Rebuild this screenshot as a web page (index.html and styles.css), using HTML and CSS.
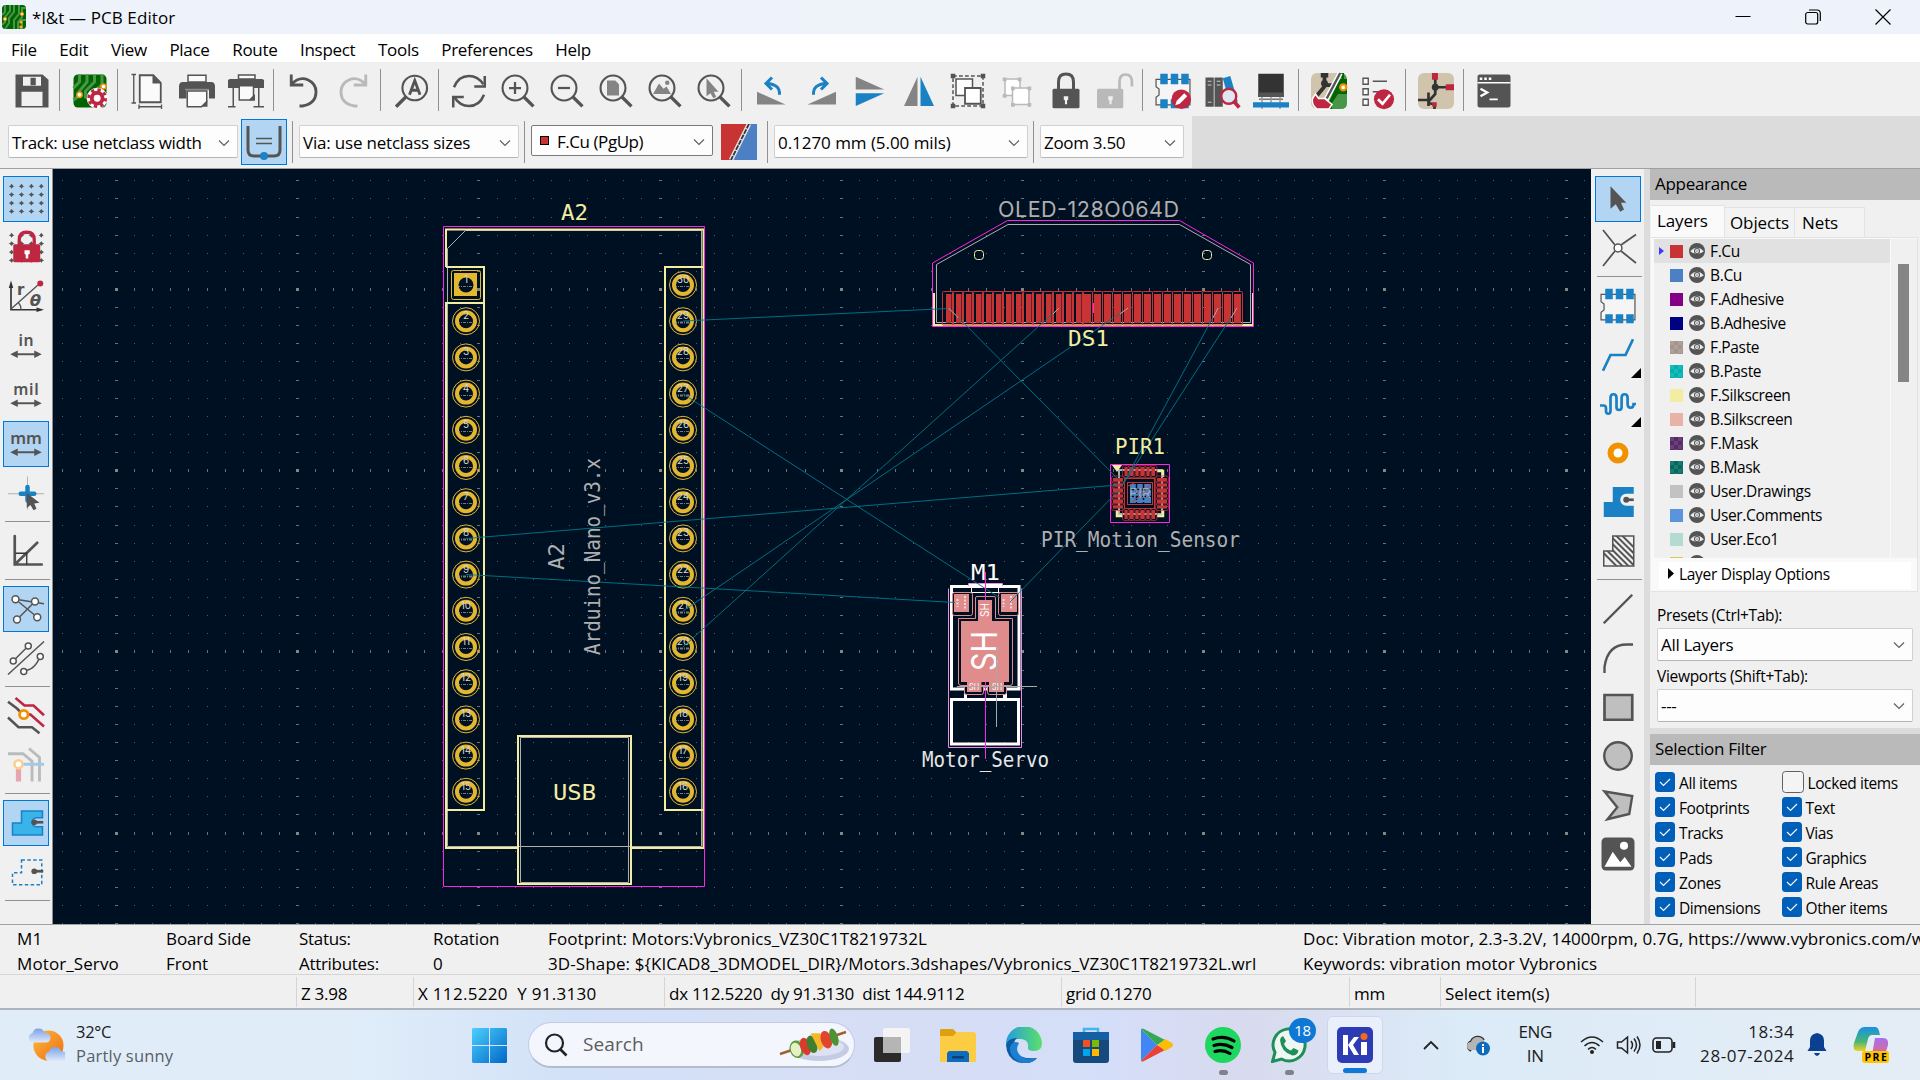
FILE: index.html
```html
<!DOCTYPE html>
<html lang="en">
<head>
<meta charset="utf-8">
<title>*l&amp;t — PCB Editor</title>
<link rel="stylesheet" href="styles.css">
</head>
<body>
<svg class="defs" width="0" height="0">
  <symbol id="eye" viewBox="0 0 16 16"><circle cx="8" cy="8" r="8" fill="#545454"/><path d="M1.2 8.2Q8 1.4 14.8 8.2Q8 14 1.2 8.2Z" fill="#f0f0f0"/><circle cx="8" cy="8" r="2.500" fill="#f0f0f0" stroke="#545454" stroke-width="1.100"/><circle cx="8" cy="8" r=".7" fill="#545454"/></symbol>
  <symbol id="chev" viewBox="0 0 12 8"><path d="M1 1.500l5 5 5-5" fill="none" stroke="#606060" stroke-width="1.200"/></symbol>
  <symbol id="lens" viewBox="0 0 24 24"><circle cx="10" cy="10" r="8.300" fill="none" stroke="#545454" stroke-width="1.400"/><path d="M16 16l6.300 6.300" stroke="#545454" stroke-width="2.200"/></symbol>
  <symbol id="dots" viewBox="0 0 24 24"><g fill="#545454"><path id="dr" d="M.4 3.500l1-.4 1-1.200 1 1.200 1 .4-1 .4-1 1.200-1-1.200zM7 3.500l1-.4 1-1.200 1 1.200 1 .4-1 .4-1 1.200-1-1.200zM13.600 3.500l1-.4 1-1.200 1 1.200 1 .4-1 .4-1 1.200-1-1.200zM20.200 3.500l1-.4 1-1.200 1 1.200 1 .4-1 .4-1 1.200-1-1.200z"/><use href="#dr" y="5.600"/><use href="#dr" y="11.200"/><use href="#dr" y="16.800"/></g></symbol>
  <symbol id="chip" viewBox="0 0 24 24"><path d="M.7 4.200h22.600v17H.7v-5l2-1.500v-4l-2-1.500z" fill="#f5f5f5" stroke="#545454" stroke-width=".8"/><path d="M3.500.5h5v7h-5zm7 0h5v7h-5zm7 0h5v7h-5zM3.500 17.500h5v6h-5zm7 0h5v6h-5zm7 0h5v6h-5z" fill="#1a81c4"/></symbol>
</svg>

<header class="titlebar">
  <svg class="appicon" viewBox="0 0 24 24"><rect width="24" height="24" rx="3.500" fill="#006400"/><path d="M3 0v7L0 10M8 0v6L3 12v5l-3 3M12 0v7l-5 6v5l-4 6M17 0v9l-5 6v9M24 3h-4v9l-4 5v7M24 15h-4v9" fill="none" stroke="#489648" stroke-width="2"/><g fill="#fff" stroke="#f29100" stroke-width="1.200"><circle cx="3" cy="14" r="1.500"/><circle cx="20" cy="9" r="1.500"/><circle cx="19" cy="17" r="1.200"/><circle cx="19" cy="22" r="1.200"/></g></svg>
  <span class="caption">*l&amp;t — PCB Editor</span>
  <div class="winbtns">
    <svg viewBox="0 0 16 16"><path d="M.5 7.500h15" stroke="#000"/></svg>
    <svg viewBox="0 0 16 16"><rect x=".7" y="3.500" width="12" height="11.500" rx="2" fill="none" stroke="#000" stroke-width="1.200"/><path d="M4 1h8q3.300 0 3.300 3.300V12" fill="none" stroke="#000" stroke-width="1.200"/></svg>
    <svg viewBox="0 0 16 16"><path d="M.5.5l15 15M15.500.5l-15 15" stroke="#000" stroke-width="1.200"/></svg>
  </div>
</header>
<nav class="menubar"><span>File</span><span>Edit</span><span>View</span><span>Place</span><span>Route</span><span>Inspect</span><span>Tools</span><span>Preferences</span><span>Help</span></nav>

<div class="toolbar">
  <b><svg viewBox="0 0 24 24"><path d="M1 1h18l4 3.500V23H1z" fill="#545454"/><path d="M6 2.500h12v6H6zM5 12.500h14V22H5z" fill="#f0f0f0"/><path d="M11 3.200h3.500v5H11z" fill="#545454"/></svg></b><i></i>
  <b><svg viewBox="0 0 24 24"><rect x="1" y="1" width="22" height="22" rx="3" fill="#006400"/><path d="M5 1v5L1 10M10 1v5l-5 6v3l-4 3M15 1v5l-6 6v5M20 1v7l-6 5" fill="none" stroke="#489648" stroke-width="2"/><circle cx="21" cy="9" r="1.700" fill="#fff" stroke="#f29100"/><circle cx="5" cy="14.500" r="1.800" fill="#fff" stroke="#f29100"/><circle cx="16.800" cy="16.800" r="7" fill="#fff"/><circle cx="16.800" cy="16.800" r="3.600" fill="none" stroke="#bf2641" stroke-width="2.600"/><circle cx="16.800" cy="16.800" r="5.600" fill="none" stroke="#bf2641" stroke-width="2" stroke-dasharray="2.200 2.200"/></svg></b><i></i>
  <b><svg viewBox="0 0 24 24"><path d="M6.500 1.500h9l5 5V19.500h-14z" fill="#fafafa" stroke="#545454" stroke-width="1.200"/><path d="M15 1.500v5.500h5.500z" fill="#545454"/><path d="M2.500 1.300v18.500M1 1h3M1 20h3M6 22.500h15M6 21v3M21 21v3" stroke="#545454" stroke-width=".9"/></svg></b>
  <b><svg viewBox="0 0 24 24"><path d="M6 1.500h12V6H6z" fill="#fafafa" stroke="#545454"/><path d="M2.500 6h19Q24 6 24 9v8h-4v-6H5v6H0V9q0-3 2.500-3z" fill="#545454"/><path d="M4 11h16" stroke="#8a8a8a"/><path d="M5.500 12h13v7l-3.500 3.500H5.500z" fill="#fafafa" stroke="#545454"/><path d="M19 18.500v4h-4z" fill="#545454"/></svg></b>
  <b><svg viewBox="0 0 24 24"><path d="M7 1.300h11V4H7z" fill="#fafafa" stroke="#545454"/><path d="M0 5q0-1 1.500-1h21Q24 4 24 5v5H0z" fill="#545454"/><path d="M3.500 10v12M20.500 10v12M0 22.500h5M17 22.500h7" stroke="#545454"/><path d="M7.500 8.500h9.500v7L14.500 18h-7z" fill="#fafafa" stroke="#545454"/><path d="M18 14v4.500h-4z" fill="#545454"/></svg></b><i></i>
  <b><svg viewBox="0 0 24 24"><path d="M3.500 1v7h8M3.500 7.500Q9 2 14.500 4.500 20 7 20 12.500q0 8-9 9.500H9" fill="none" stroke="#545454" stroke-width="1.900"/></svg></b>
  <b><svg viewBox="0 0 24 24"><path d="M20.500 1v7h-8M20.500 7.500Q15 2 9.500 4.500 4 7 4 12.500q0 8 9 9.500h2" fill="none" stroke="#b9b9b9" stroke-width="1.900"/></svg></b><i></i>
  <b><svg viewBox="0 0 24 24"><circle cx="14.500" cy="10" r="8.200" fill="none" stroke="#545454" stroke-width="1.400"/><path d="M8.500 16l-6.500 6.500" stroke="#545454" stroke-width="2.200"/><path d="M11 14.500L14.500 5 18 14.500M12.300 11.500h4.500" fill="none" stroke="#545454" stroke-width="1.900"/></svg></b><i></i>
  <b><svg viewBox="0 0 24 24"><path d="M2 9.500Q5 2 12 2q6 0 9.500 5.500M22 14.500Q19 22 12 22q-6 0-9.500-5.500" fill="none" stroke="#545454" stroke-width="1.700"/><path d="M22.500 2v7h-7M1.500 23v-7h7" fill="none" stroke="#545454" stroke-width="1.700"/></svg></b>
  <b><svg viewBox="0 0 24 24"><use href="#lens"/><path d="M10 6v8M6 10h8" stroke="#545454" stroke-width="1.500"/></svg></b>
  <b><svg viewBox="0 0 24 24"><use href="#lens"/><path d="M6 10h8" stroke="#545454" stroke-width="1.500"/></svg></b>
  <b><svg viewBox="0 0 24 24"><use href="#lens"/><path d="M6 5h5.500L14 7.500V15H6z" fill="#848484"/></svg></b>
  <b><svg viewBox="0 0 24 24"><use href="#lens"/><path d="M4 14l4-7 3 3.500 2-1.500 3 5z" fill="#848484"/><circle cx="13.500" cy="6.500" r="1.500" fill="#848484"/></svg></b>
  <b><svg viewBox="0 0 24 24"><use href="#lens"/><path d="M7 3.500v12l2.700-2 1.800 3.300 2-1-1.700-3.300H15z" fill="#848484"/></svg></b><i></i>
  <b><svg viewBox="0 0 24 24"><path d="M2 12.500V21h19z" fill="#848484"/><path d="M17 14.500Q17.500 7.500 8.500 7M12 3L8 7l4 4" fill="none" stroke="#1a81c4" stroke-width="2"/></svg></b>
  <b><svg viewBox="0 0 24 24"><path d="M22 12.500V21H3z" fill="#848484"/><path d="M7 14.500Q6.500 7.500 15.500 7M12 3l4 4-4 4" fill="none" stroke="#1a81c4" stroke-width="2"/></svg></b>
  <b><svg viewBox="0 0 24 24"><path d="M2.500 2.500v8.500h19z" fill="#848484"/><path d="M2.500 22v-8.500h19z" fill="#1a81c4"/></svg></b>
  <b><svg viewBox="0 0 24 24"><path d="M11 2.500V22H2z" fill="#848484"/><path d="M13 2.500V22h9z" fill="#1a81c4"/></svg></b>
  <b><svg viewBox="0 0 24 24"><path d="M2 2h20v20H2z" fill="none" stroke="#545454" stroke-dasharray="2.500 1.500"/><path d="M4 4h11v11H4z" fill="#fff" stroke="#545454"/><path d="M10 10h10.500v10.500H10z" fill="#fff" stroke="#545454" stroke-width="1.200"/><path d="M.5.5h3v3h-3zm20 0h3v3h-3zm0 20h3v3h-3zm-20 0h3v3h-3z" fill="#545454"/></svg></b>
  <b><svg viewBox="0 0 24 24"><path d="M4 4h10v11H4z" fill="#fff" stroke="#b9b9b9"/><path d="M9 10h11v11H9z" fill="#fff" stroke="#b9b9b9"/><path d="M2.500 3h2.500v2.500H2.500zm10 0H15v2.500h-2.500zm-10 11H5v2.500H2.500zM8 9h2.500v2.500H8zm11 0h2.500v2.500H19zM8 20h2.500v2.500H8zm11 0h2.500v2.500H19z" fill="#b9b9b9"/></svg></b>
  <b><svg viewBox="0 0 24 24"><path d="M7 12V6q0-5.300 5-5.300T17 6v6" fill="none" stroke="#545454" stroke-width="2"/><rect x="3" y="10.500" width="18" height="13" rx="1" fill="#545454"/><path d="M10.500 15.500h3v2.200l-.8.7v2.500h-1.400v-2.500l-.8-.7z" fill="#f0f0f0"/></svg></b>
  <b><svg viewBox="0 0 24 24"><path d="M15 12V6q0-5 4-5 4.300 0 4.300 5v3" fill="none" stroke="#b9b9b9" stroke-width="1.800"/><rect x="0" y="10.500" width="17.500" height="13" rx="1" fill="#b9b9b9"/><path d="M7.500 15.500h3v2.200l-.8.7v2.500H8.300v-2.500l-.8-.7z" fill="#f0f0f0"/></svg></b><i></i>
  <b><svg viewBox="0 0 24 24"><use href="#chip"/><circle cx="17.500" cy="17.500" r="6.500" fill="#bf2641"/><path d="M13.500 21.500l1-3 5-5 2 2-5 5z" fill="#fff"/></svg></b>
  <b><svg viewBox="0 0 24 24"><path d="M1 3h5.500v19.500H1zM7 3h5.500v19.500H7z" fill="#545454"/><path d="M12.500 3.500l5-1.500 5 17-5 2z" fill="#1a81c4"/><path d="M2.500 5.500H5M2.500 8H5M8.500 5.500H11M8.500 8H11M2.500 19.500H5" stroke="#ccc" stroke-width=".7"/><circle cx="16.500" cy="15.500" r="5" fill="#dce8f2" stroke="#bf2641" stroke-width="1.600"/><path d="M20 19l3.500 4" stroke="#bf2641" stroke-width="2.500"/></svg></b>
  <b><svg viewBox="0 0 24 24"><path d="M3.500.5h17V16h-17z" fill="#333"/><path d="M3.500 13h17v3h-17z" fill="#545454"/><path d="M4 17.500h16" stroke="#777"/><path d="M6 16v4M12 16v4M18 16v4M6 22v2M18 22v2" stroke="#999"/><path d="M0 19.500h24V23H0z" fill="#1a81c4"/></svg></b><i></i>
  <b><svg viewBox="0 0 24 24"><rect width="24" height="24" rx="4" fill="#d0c4ac"/><path d="M24 6v14q0 4-4 4H8L19 0h1q4 0 4 6z" fill="#489648"/><path d="M24 4v10h-6l-4 6v4h-4l9-20zM19 0h3v7z" fill="#006400"/><path d="M9 0v9l-5 6M9 8h5" stroke="#333" stroke-width="2.500" fill="none"/><path d="M6.500 0h5v3h-5z" fill="#333"/><circle cx="9" cy="7" r="2.300" fill="#333"/><circle cx="21.500" cy="9.500" r="2" fill="#fff" stroke="#f29100" stroke-width="1.500"/><path d="M19.500 0L10 18" stroke="#fff" stroke-width="3.500"/><path d="M19.500 0L10.500 17" stroke="#545454" stroke-width="1.600"/><path d="M3 14l2 3h4l5 4-2 3H4q-4-3-3-7z" fill="#bf2641" stroke="#fff"/></svg></b>
  <b><svg viewBox="0 0 24 24"><path d="M2 3.500h3.500v4H2zm0 7h3.500v4H2zm0 7h3.500v4H2z" fill="#fafafa" stroke="#545454" stroke-width=".9"/><path d="M8.500 5.500H18M8.500 12.500H15" stroke="#545454"/><circle cx="16" cy="17.500" r="6.700" fill="#bf2641"/><path d="M12 17.500l3 3 5-6" fill="none" stroke="#fff" stroke-width="1.800"/></svg></b><i></i>
  <b><svg viewBox="0 0 24 24"><rect width="24" height="24" rx="4" fill="#d0c4ac"/><path d="M11.500 2v12L7 19M0 18h7v4M7 13v7M11.500 9.500H22M7 20l4 1v3" fill="none" stroke="#333" stroke-width="1.800"/><circle cx="11.500" cy="9.500" r="2.300" fill="#333"/><path d="M9.300 0h4v4.500h-4zM18.500 7.500H24v4h-5.500zM9.500 19.500h3v3h-3z" fill="#bf2641"/></svg></b><i></i>
  <b><svg viewBox="0 0 24 24"><rect x="1" y="1" width="22" height="22" rx="1.500" fill="#545454"/><path d="M1 6.500h22" stroke="#fff"/><path d="M2.500 3h1.700v1.700H2.500zm3 0h1.700v1.700H5.500zm3 0h1.700v1.700H8.500zM9 17h5.500v1.200H9z" fill="#fff"/><path d="M3 10.500l4.500 2.500L3 15.500" fill="none" stroke="#fff" stroke-width="1.500"/></svg></b>
</div>

<div class="optbar">
  <div class="optrow">
    <div class="combo c1">Track: use netclass width<svg><use href="#chev"/></svg></div>
    <div class="autow on"><svg viewBox="0 0 36 36"><path d="M2 2v24q0 6 6 6h20q6 0 6-6V2" fill="none" stroke="#545454" stroke-width="3"/><path d="M10 14.500h16M10 19.500h16" stroke="#545454" stroke-width="1.600"/><circle cx="18" cy="32" r="4" fill="#1a81c4"/></svg></div>
    <i></i>
    <div class="combo c2">Via: use netclass sizes<svg><use href="#chev"/></svg></div>
    <i></i>
    <div class="combo c3"><em></em>F.Cu (PgUp)<svg><use href="#chev"/></svg></div>
    <svg class="pair" viewBox="0 0 36 36"><path d="M0 0h28L9 36H0z" fill="#c83434"/><path d="M28 0h8v36H9z" fill="#4d7fc4"/><path d="M28 0L10 36" stroke="#e8e8e8" stroke-width="4.500"/><path d="M28 0L10 36" stroke="#333" stroke-width="1.800" stroke-dasharray="5 1"/></svg>
    <i></i>
    <div class="combo c4">0.1270 mm (5.00 mils)<svg><use href="#chev"/></svg></div>
    <i></i>
    <div class="combo c5">Zoom 3.50<svg><use href="#chev"/></svg></div>
  </div>
</div>

<main class="work">
  <aside class="vbar left">
    <b class="on"><svg viewBox="0 0 24 24"><use href="#dots"/></svg></b>
    <b><svg viewBox="0 0 24 24"><use href="#dots"/><path d="M7.500 11V6.500q0-5 5-5t5 5V11" fill="none" stroke="#bf2641" stroke-width="2.200"/><rect x="3.500" y="9.500" width="18" height="12" rx="1" fill="#bf2641"/><path d="M11 13.500h3.500v2.300l-1 .7V19h-1.700v-2.500l-.8-.7z" fill="#fff"/></svg></b>
    <b><svg viewBox="0 0 24 24"><path d="M2 21V4M2 20.500h20" stroke="#333" stroke-width="1.100"/><path d="M2 1l1.500 5h-3zM24 20.500l-5 1.500v-3z" fill="#333"/><path d="M2 20L20 4M7 16q2 2 1.500 4.500" fill="none" stroke="#545454" stroke-width=".9"/><circle cx="21.500" cy="3" r="2" fill="#bf2641"/><text x="6" y="10.500" class="ic" font-size="10">r</text><text x="14.500" y="18" class="ic it" font-size="11">θ</text></svg></b>
    <b><svg viewBox="0 0 24 24"><text x="7" y="12" class="ic lt" font-size="10.500" textLength="10">in</text><path d="M4 17.500h16" stroke="#545454" stroke-width="1.300"/><path d="M1.500 17.500l5-2.500v5zM22.500 17.500l-5-2.500v5z" fill="#545454"/></svg></b>
    <b><svg viewBox="0 0 24 24"><text x="3.500" y="12" class="ic lt" font-size="10.500" textLength="17">mil</text><path d="M4 17.500h16" stroke="#545454" stroke-width="1.300"/><path d="M1.500 17.500l5-2.500v5zM22.500 17.500l-5-2.500v5z" fill="#545454"/></svg></b>
    <b class="on"><svg viewBox="0 0 24 24"><text x="1.500" y="12" class="ic lt" font-size="11" textLength="21">mm</text><path d="M4 17.500h16" stroke="#545454" stroke-width="1.300"/><path d="M1.500 17.500l5-2.500v5zM22.500 17.500l-5-2.500v5z" fill="#545454"/></svg></b>
    <b><svg viewBox="0 0 24 24"><path d="M13 1v22M0 12.500h24" stroke="#aaa" stroke-width=".6"/><path d="M13 8v9M8.500 12.500h9" stroke="#1a81c4" stroke-width="3" stroke-linecap="round"/><path d="M12.500 12v10l2.500-2 2 3.500 2-1-1.500-3.500 3.500-.5z" fill="#545454"/></svg></b><i></i>
    <b><svg viewBox="0 0 24 24"><path d="M4.500 2v19h18M4.500 21L19.500 6.500" fill="none" stroke="#545454" stroke-width="1.800" stroke-linecap="round"/><path d="M5 13.500h7.500V21" fill="none" stroke="#333" stroke-width=".9"/></svg></b><i></i>
    <b class="on"><svg viewBox="0 0 24 24"><path d="M5 5.500l14.500 12M18 7L6 19M5 5.500L24 8.500" stroke="#545454" stroke-width="1"/><g fill="#fff" stroke="#545454"><circle cx="5" cy="5.500" r="2.300"/><circle cx="18" cy="7" r="2.300"/><circle cx="6" cy="19" r="2.300"/><circle cx="19.500" cy="17.500" r="2.300"/></g></svg></b>
    <b><svg viewBox="0 0 24 24"><path d="M4 13.500L13.500 4M0 23L24 1M10 20.500q8 0 11.500-10" fill="none" stroke="#545454" stroke-width="1"/><g fill="#fff" stroke="#545454"><circle cx="3.500" cy="14" r="2"/><circle cx="13.500" cy="4" r="2"/><circle cx="10.500" cy="21" r="2"/><circle cx="21.500" cy="11" r="2"/></g></svg></b><i></i>
    <b><svg viewBox="0 0 24 24"><path d="M0 2.500l6 4.500 4 4M0 13l7 6.500h9l5 4" fill="none" stroke="#545454" stroke-width="1.700"/><path d="M5 0l6 5h6l7 6.500M10.500 11H15l9 8" fill="none" stroke="#bf2641" stroke-width="1.700"/><circle cx="10.500" cy="11" r="2.800" fill="#fff" stroke="#f29100" stroke-width="1.800"/></svg></b>
    <b><svg viewBox="0 0 24 24"><path d="M0 4.500h10l6 5V23M14 1l7 6v16" fill="none" stroke="#bbb" stroke-width="1.900"/><path d="M7 12v11" stroke="#e8a4b0" stroke-width="3.500"/><path d="M10 11.500h14" stroke="#9fcbe6" stroke-width="2"/><circle cx="7" cy="11.500" r="2.700" fill="#fff" stroke="#fbd08e" stroke-width="1.700"/></svg></b><i></i>
    <b class="on"><svg viewBox="0 0 24 24"><path d="M9 4h14v4.500h-4a3 3 0 0 0 0 6h4v5.500H3v-8h6z" fill="#39b4ea" stroke="#1a81c4" stroke-width="1"/><path d="M17 11.500h6.500" stroke="#545454" stroke-width="1.800"/><circle cx="17.500" cy="11.500" r="1.900" fill="#545454"/></svg></b>
    <b><svg viewBox="0 0 24 24"><path d="M9 4h13.500v16.500H3v-8h6z" fill="none" stroke="#1a81c4" stroke-dasharray="2.300 1.600" stroke-width="1"/><path d="M17 11.500h6.500" stroke="#545454" stroke-width="1.800"/><circle cx="17.500" cy="11.500" r="1.900" fill="#545454"/></svg></b><i></i>
  </aside>

  <svg class="board" id="board" viewBox="53 169 1538 755" width="1538" height="755">
    <g id="grid"></g>
    <g id="silk" fill="none" stroke="#f2eda1" stroke-width="2">
      <path stroke="#afafaf" stroke-width="1" d="M447.500 846.500V248.500L465.500 230.500H701.500V846.500ZM520.500 737.500h108v145h-108z"/>
      <path d="M446 267V229.500H703.500V848H631M518 848H446V303H484V810H446M446 267H484V303M703 267H665V810H703M518 736H631V884H518Z"/>
      <path stroke="#ff26e2" stroke-width="1" d="M443.500 226.500h261v660h-261z"/>
    </g>
    <g id="pins"></g>
    <g id="oled">
      <path fill="none" stroke="#afafaf" d="M936.500 322.500V264.500L1008 224.500H1179.500L1250.500 264.500V322.500Z"/>
      <path fill="none" stroke="#f2eda1" stroke-width="2" d="M934 293V325H1253V293"/>
      <g fill="none" stroke="#f2eda1"><rect x="974.500" y="250.500" width="9" height="9" rx="3"/><rect x="1202.500" y="250.500" width="9" height="9" rx="3"/></g>
      <g id="oledpads"></g>
      <path fill="none" stroke="#ff26e2" d="M932.500 326.500V263L1007.500 220.500H1179.500L1253.500 263V326.500ZM1093.500 303v10"/>
    </g>
    <g id="pir">
      <path d="M1119 470h43v44h-43z" fill="none" stroke="#afafaf" stroke-width="2"/>
      <path d="M1157 471h6v6M1163 510v6h-6M1123 516h-6v-6" fill="none" stroke="#f2eda1" stroke-width="2.500"/>
      <path d="M1112 465h10l-5 7z" fill="#f2eda1"/>
      <g id="pirpads"></g>
      <rect x="1124.500" y="478.500" width="30" height="30" fill="#001023" stroke="#c83434"/>
      <rect x="1127.500" y="482.500" width="25" height="22" fill="#001023" stroke="#c83434"/>
      <rect x="1130" y="484" width="21" height="19" fill="#4d7fc4"/>
      <path d="M1130 489.500h21M1130 496.500h21M1136.500 484v19M1143.500 484v19" stroke="#001023" stroke-width="1.500" stroke-dasharray="4 2"/>
      <path d="M1133 502l18-18M1128 486l6-3" stroke="#c83434"/>
      <text x="1129" y="498" font-size="13" class="st" fill="#b9b9b9" opacity=".8" textLength="22" lengthAdjust="spacingAndGlyphs">PIR</text>
      <path d="M1110.500 464.500h59v58h-59z" fill="none" stroke="#ff26e2"/>
    </g>
    <g id="motor">
      <path fill="none" stroke="#fff" stroke-width="3" d="M951.500 586.500H1019V689H951.500ZM951.500 699.500H1018.500V744H951.500Z"/>
      <path stroke="#fff" fill="none" d="M953 592.500H1018M971.500 586v6M998.500 586v6M969 584.500h33"/>
      <path fill="#fff" d="M964 688h3v12h-3zM1003 688h4v12h-4z"/>
      <path fill="none" stroke="#f08be8" d="M948.500 588.500V747.500H1021.500V588.500M968.500 586V583.500H1002.500V586"/>
      <g fill="#001023" stroke="#e08c8c"><rect x="952.500" y="592.500" width="20" height="23" rx="2"/><rect x="998.500" y="592.500" width="20" height="23" rx="2"/><rect x="964.500" y="680" width="19" height="14.500" rx="2"/><rect x="987.500" y="680" width="19" height="14.500" rx="2"/><path d="M975.500 618.500V598q0-1.500 1.500-1.500h17q1.500 0 1.500 1.500v20.500h17V683q0 2.500-2.500 2.500H961q-2.500 0-2.500-2.500V618.500Z"/></g>
      <path fill="#e08c8c" d="M954 594h15v18h-15zM1001 594h16v18h-16zM978 600h14v21h17v61h-48v-61h17zM967 681h14.500v11H967zM989 681h15v11h-15z"/>
      <g class="st" fill="#fff">
        <text transform="translate(997 671) rotate(-90)" font-size="36" textLength="40" lengthAdjust="spacingAndGlyphs">SH</text>
        <text transform="translate(989 617) rotate(-90)" font-size="12" textLength="14" lengthAdjust="spacingAndGlyphs">SH</text>
        <text x="969" y="690" font-size="9" textLength="10" lengthAdjust="spacingAndGlyphs">SH</text>
        <text x="992" y="690" font-size="9" textLength="10" lengthAdjust="spacingAndGlyphs">SH</text>
      </g>
      <path d="M957.500 599v8M965 596v14M1003.500 599v8M1011 596v14" stroke="#f7dada" stroke-width="2" stroke-dasharray="2 1.500"/>
    </g>
    <g fill="none" stroke="#00788a" stroke-width="1" opacity=".9">
      <path d="M683 321L948.500 308.500M683 394L1000 598M466 538.500L1118 485M466 574.500L955 602.500M683 611L1128 308M683 647L1059 308M949 308L1119 480M1218 308L1124 482M1237 308L1122 486M1119 490L1010 602"/>
    </g>
    <path d="M948.500 308l10 10M1053 314l6-6M1120 314l8-6M1213 318l5-10M1231 318l6-10" stroke="#f0b5ae" opacity=".8"/>
    <path d="M985.500 572v28M985.500 682v77" stroke="#ff26e2" fill="none"/>
    <path d="M957 686.500h80M996.500 647v80" stroke="#a9a9a9" fill="none"/>
    <g class="st" font-size="21.500">
      <g fill="#f2eda1">
        <text class="mono" x="561" y="220" textLength="27" lengthAdjust="spacingAndGlyphs">A2</text>
        <text class="mono" x="553" y="799.500" textLength="43" lengthAdjust="spacingAndGlyphs">USB</text>
        <text class="mono" x="1068" y="345.500" textLength="41" lengthAdjust="spacingAndGlyphs">DS1</text>
        <text class="mono" x="1115" y="454" textLength="50" lengthAdjust="spacingAndGlyphs">PIR1</text>
      </g>
      <g fill="#afafaf">
        <text x="998" y="216.500" textLength="181">OLED-128O064D</text>
        <text class="mono" x="1041" y="546.500" textLength="199" lengthAdjust="spacingAndGlyphs">PIR_Motion_Sensor</text>
        <text class="mono" transform="translate(564 570) rotate(-90)" textLength="27" lengthAdjust="spacingAndGlyphs">A2</text>
        <text class="mono" transform="translate(600 655) rotate(-90)" textLength="197" lengthAdjust="spacingAndGlyphs">Arduino_Nano_v3.x</text>
      </g>
      <text class="mono" x="971" y="580" textLength="29" fill="#fff" lengthAdjust="spacingAndGlyphs">M1</text>
      <text class="mono" x="922" y="767" textLength="127" fill="#e6e6e6" lengthAdjust="spacingAndGlyphs">Motor_Servo</text>
    </g>
  </svg>

  <aside class="vbar right">
    <b class="on"><svg viewBox="0 0 24 24"><path d="M7 1.500v15l3.500-3 3 5 2.500-1.500-2-4.500h3.500z" fill="#545454" transform="translate(0 2)"/></svg></b>
    <b><svg viewBox="0 0 24 24"><path d="M2 0l8 10M24 3L14 10M2 24l8-10M24 22l-10-8" stroke="#545454" stroke-width="1.200"/><circle cx="12" cy="12" r="2.600" fill="#fff" stroke="#545454"/></svg></b><i></i>
    <b><svg viewBox="0 0 24 24"><use href="#chip"/></svg></b>
    <b class="sub"><svg viewBox="0 0 24 24"><path d="M2 22.500L7 12h10l5-10.500" fill="none" stroke="#1a81c4" stroke-width="1.800"/></svg></b>
    <b class="sub"><svg viewBox="0 0 24 24"><path d="M0 13h2.500q1.500 0 1.500 2v1.500q0 2 1.500 2T7 16.500V8q0-2.500 2-2.500T11 8v6q0 2 1.700 2t1.700-2V8q0-2.500 2-2.500t2 2.500v4q0 2.500 2 2.500t2-2.500H24" fill="none" stroke="#1a81c4" stroke-width="1.800"/></svg></b>
    <b><svg viewBox="0 0 24 24"><circle cx="12" cy="12" r="5" fill="#fff" stroke="#f29100" stroke-width="4"/></svg></b>
    <b><svg viewBox="0 0 24 24"><path d="M8.500 2H22.500V6.500H17.500a4 4 0 0 0 0 8H22.500V22H2.500V12H8.500z" fill="#1a81c4"/><path d="M17 10.500h5.500" stroke="#545454" stroke-width="1.800"/><circle cx="17.500" cy="10.500" r="2" fill="#545454"/></svg></b>
    <b><svg viewBox="0 0 24 24"><clipPath id="hz"><path d="M8.500 2h14v20h-20V12h6z"/></clipPath><g clip-path="url(#hz)"><path d="M0-1l24 24M-4-1l24 24M-8-1l24 24M4-1l24 24M8-1l24 24M12-1l24 24M-12-1l24 24" stroke="#545454" stroke-width="1.300"/></g><path d="M8.500 2h14v20h-20V12h6z" fill="none" stroke="#545454"/></svg></b><i></i>
    <b><svg viewBox="0 0 24 24"><path d="M2.500 21.500l19-19" stroke="#545454" stroke-width="1.600"/></svg></b>
    <b><svg viewBox="0 0 24 24"><path d="M3 22v-4Q5 3 18 3h4" fill="none" stroke="#545454" stroke-width="1.600"/></svg></b>
    <b><svg viewBox="0 0 24 24"><path d="M3 4h18.500v16.500H3z" fill="#bfbfbf" stroke="#545454" stroke-width="1.800"/></svg></b>
    <b><svg viewBox="0 0 24 24"><circle cx="12" cy="12" r="9.200" fill="#bfbfbf" stroke="#545454" stroke-width="1.600"/></svg></b>
    <b><svg viewBox="0 0 24 24"><path d="M3 3l18.500 3-2 12L5 21.500l6.500-8z" fill="#bfbfbf" stroke="#545454" stroke-width="1.600"/></svg></b>
    <b><svg viewBox="0 0 24 24"><rect x="1" y="1" width="22" height="22" rx="3" fill="#545454"/><path d="M3 20.500l5.500-10 5 7 3-3.500 4.500 6.500z" fill="#fff"/><circle cx="16" cy="6.500" r="2.700" fill="#fff"/></svg></b>
  </aside>

  <section class="panel">
    <h2>Appearance</h2>
    <div class="tabs"><span class="cur">Layers</span><span>Objects</span><span>Nets</span></div>
    <div class="page">
      <div class="list">
        <ul>
          <li class="sel"><s style="background:#c83434"></s><svg><use href="#eye"/></svg>F.Cu</li>
          <li><s style="background:#4d7fc4"></s><svg><use href="#eye"/></svg>B.Cu</li>
          <li><s style="background:#840084"></s><svg><use href="#eye"/></svg>F.Adhesive</li>
          <li><s style="background:#000084"></s><svg><use href="#eye"/></svg>B.Adhesive</li>
          <li><s class="chk" style="background-color:#a5948c"></s><svg><use href="#eye"/></svg>F.Paste</li>
          <li><s class="chk" style="background-color:#00b0b0"></s><svg><use href="#eye"/></svg>B.Paste</li>
          <li><s style="background:#f2eda1"></s><svg><use href="#eye"/></svg>F.Silkscreen</li>
          <li><s style="background:#e8b2a7"></s><svg><use href="#eye"/></svg>B.Silkscreen</li>
          <li><s class="chk" style="background-color:#562a66"></s><svg><use href="#eye"/></svg>F.Mask</li>
          <li><s class="chk" style="background-color:#026a60"></s><svg><use href="#eye"/></svg>B.Mask</li>
          <li><s style="background:#c2c2c2"></s><svg><use href="#eye"/></svg>User.Drawings</li>
          <li><s style="background:#5994dc"></s><svg><use href="#eye"/></svg>User.Comments</li>
          <li><s style="background:#b4dbd2"></s><svg><use href="#eye"/></svg>User.Eco1</li>
          <li><s style="background:#d8c852"></s><svg><use href="#eye"/></svg></li>
        </ul>
        <div class="scroll"><div></div></div>
      </div>
      <div class="ldo"><svg viewBox="0 0 6 11"><path d="M0 0l6 5.500L0 11z"/></svg>Layer Display Options</div>
    </div>
    <label>Presets (Ctrl+Tab):</label>
    <div class="combo cp">All Layers<svg><use href="#chev"/></svg></div>
    <label class="l2">Viewports (Shift+Tab):</label>
    <div class="combo cp">---<svg><use href="#chev"/></svg></div>
    <div class="strip"></div>
    <h2>Selection Filter</h2>
    <div class="filter">
      <span class="ck">All items</span><span>Locked items</span>
      <span class="ck">Footprints</span><span class="ck">Text</span>
      <span class="ck">Tracks</span><span class="ck">Vias</span>
      <span class="ck">Pads</span><span class="ck">Graphics</span>
      <span class="ck">Zones</span><span class="ck">Rule Areas</span>
      <span class="ck">Dimensions</span><span class="ck">Other items</span>
    </div>
  </section>
</main>

<section class="msg">
  <div>M1<br>Motor_Servo</div><div>Board Side<br>Front</div><div>Status:<br>Attributes:</div><div>Rotation<br>0</div><div>Footprint: Motors:Vybronics_VZ30C1T8219732L<br>3D-Shape: ${KICAD8_3DMODEL_DIR}/Motors.3dshapes/Vybronics_VZ30C1T8219732L.wrl</div><div>Doc: Vibration motor, 2.3-3.2V, 14000rpm, 0.7G, https://www.vybronics.com/w<br>Keywords: vibration motor Vybronics</div>
</section>
<footer class="status"><span></span><span>Z 3.98</span><span>X 112.5220&nbsp; Y 91.3130</span><span>dx 112.5220&nbsp; dy 91.3130&nbsp; dist 144.9112</span><span>grid 0.1270</span><span>mm</span><span>Select item(s)</span><span></span></footer>

<div class="taskbar">
  <div class="weather">
    <svg viewBox="0 0 38 36"><defs><linearGradient id="sun" x2="1" y2="1"><stop offset="0" stop-color="#fbbc3c"/><stop offset="1" stop-color="#f06a12"/></linearGradient><linearGradient id="cl" x2="0" y2="1"><stop offset="0" stop-color="#7ba2e6"/><stop offset="1" stop-color="#dfe9fa"/></linearGradient></defs><circle cx="21" cy="18" r="15.500" fill="url(#sun)"/><path id="cld" d="M4 15a5 5 0 0 1 .5-9.500A6.500 6.500 0 0 1 17 5a5 5 0 0 1 2 10z" fill="url(#cl)"/><use href="#cld" x="17" y="19"/></svg>
    <p>32°C<br><span>Partly sunny</span></p>
  </div>
  <svg class="start" viewBox="0 0 35 35"><defs><linearGradient id="win" x2="1" y2="1"><stop offset="0" stop-color="#4cd0fd"/><stop offset="1" stop-color="#0067c8"/></linearGradient></defs><path d="M1 0h16v17H0V1zM18 0h16l1 1v16H18zM0 18h17v17H1l-1-1zM18 18h17v16l-1 1H18z" fill="url(#win)"/></svg>
  <div class="search"><svg class="mag" viewBox="0 0 24 24"><circle cx="10.500" cy="10" r="8.500" fill="none" stroke="#222" stroke-width="2.200"/><path d="M16.500 16.500l6 6" stroke="#222" stroke-width="2.600"/></svg><span>Search</span>
    <svg class="kebab" viewBox="0 0 72 34"><ellipse cx="41" cy="21" rx="30" ry="12" fill="#c4cbe4"/><ellipse cx="41" cy="19" rx="25" ry="9" fill="#dde2f2"/><path d="M2 26L68 4" stroke="#a0602c" stroke-width="2.500"/><g transform="rotate(-18 35 16)"><ellipse cx="18" cy="16" rx="7" ry="9" fill="#5f9a3c"/><ellipse cx="17" cy="16" rx="5" ry="7" fill="#e6f0c4"/><ellipse cx="27" cy="16" rx="5" ry="9" fill="#d93a2b"/><ellipse cx="34" cy="16" rx="5" ry="9" fill="#3f7f2e"/><path d="M36 5l9 3 2 12-8 5z" fill="#f5b829"/><ellipse cx="49" cy="16" rx="5.500" ry="9" fill="#e2452f"/><ellipse cx="57" cy="16" rx="4" ry="9" fill="#4d9234"/></g></svg>
  </div>
  <div class="apps">
    <div><svg viewBox="0 0 36 36"><rect x="0" y="10" width="27" height="25" rx="2" fill="#2b2b2b"/><rect x="9" y="1" width="27" height="25" rx="2" fill="#f4f4f4"/><path d="M9 10h18v16H9z" fill="#b5b5b5"/></svg></div>
    <div><svg viewBox="0 0 36 36"><path d="M1 2h12l3 3v8H0V3z" fill="#dfa00f"/><path d="M0 9h13l4-4h17l2 2v28H0z" fill="#fccc45"/><path d="M7 35v-9l2-2h18l2 2v9z" fill="#0f6cbd"/><path d="M12 29h12v2.500H12z" fill="#073f78"/></svg></div>
    <div><svg viewBox="0 0 36 36"><defs><linearGradient id="ed" x2="1"><stop offset="0" stop-color="#249cdc"/><stop offset="1" stop-color="#5ce06a"/></linearGradient></defs><path d="M0 18A18 18 0 0 1 36 16q0 8-8 8-7 0-6-4 1-7-7-8Q4 11 0 18z" fill="url(#ed)"/><path d="M0 18q2-7 11-7-6 6-2 13 5 9 22 7Q26 37 16 36 1 34 0 18z" fill="#0c59a4"/><path d="M13 16q-5 8 3 14 8 4 15 1-6 6-14 5Q3 32 4 20q3-7 9-4z" fill="#1b7fd2"/></svg></div>
    <div><svg viewBox="0 0 36 36"><path d="M11 7V2h14v5" fill="none" stroke="#3ab8f0" stroke-width="2.500"/><rect x="0" y="5" width="36" height="31" rx="3" fill="#174a7c"/><path d="M0 5h36v8H0z" fill="#1560a5"/><path d="M10 13h7v7h-7z" fill="#f25022"/><path d="M19 13h7v7h-7z" fill="#7fba00"/><path d="M10 22h7v7h-7z" fill="#00a4ef"/><path d="M19 22h7v7h-7z" fill="#ffb900"/></svg></div>
    <div><svg viewBox="0 0 36 36"><path d="M2 2v32l16-16z" fill="#4285f4"/><path d="M2 2q1-1 3 0l21 11-8 5z" fill="#34a853"/><path d="M2 34q1 1 3 0l21-11-8-5z" fill="#ea4335"/><path d="M26 12l7 4q2 2 0 4l-7 4-7-6z" fill="#fbbc04"/></svg></div>
    <div class="run"><svg viewBox="0 0 36 36"><circle cx="18" cy="18" r="18" fill="#1ed760"/><path d="M8 12q11-4 21 2M9 18.500q9-3 18 2M10 24.500q8-2.500 15 2" fill="none" stroke="#000" stroke-width="3.200" stroke-linecap="round"/></svg></div>
    <div class="run"><svg viewBox="0 0 36 36"><path d="M1.500 34.500l2.500-9A16 16 0 1 1 10.500 32z" fill="#eef7f2" stroke="#1f8f5a" stroke-width="3"/><path d="M12 9l3 5-2 3q2 5 7 6.500l2.500-2.500 5 2.500q-1 5-6 5Q10 25 9 13q.5-3 3-4z" fill="#1f8f5a"/></svg><u>18</u></div>
    <div class="act"><svg viewBox="0 0 36 36"><rect width="36" height="36" rx="5" fill="#2d3cb4"/><path d="M6 8h5v20H6zM11 18l6-8h5l-6 8 6 10h-5zM24 15h6v13h-6z" fill="#fff"/><circle cx="27" cy="9.500" r="3.500" fill="#f26a1b"/></svg></div>
  </div>
  <div class="tray">
    <svg class="up" viewBox="0 0 16 10"><path d="M1 9l7-7 7 7" fill="none" stroke="#222" stroke-width="1.800"/></svg>
    <svg class="od" viewBox="0 0 26 22"><path d="M6 17a5.500 5.500 0 0 1 0-10A7.500 7.500 0 0 1 19 6" fill="#aaa" stroke="#333" stroke-width="1.800"/><path d="M6 16a4 4 0 0 1 0-8 7 7 0 0 1 13-1v9z" fill="#b5b5b5"/><circle cx="18" cy="14.500" r="7" fill="#0f6cbd"/><path d="M17 13h2v6h-2zM17 10h2v2h-2z" fill="#fff"/></svg>
    <p class="lang">ENG<br>IN</p>
    <svg class="wifi" viewBox="0 0 24 20"><path d="M1 7q11-10 22 0M4.500 11q7.500-7 15 0M8 14.500q4-4 8 0" fill="none" stroke="#222" stroke-width="1.500"/><circle cx="12" cy="17" r="2" fill="#222"/></svg>
    <svg class="vol" viewBox="0 0 24 20"><path d="M1 7h4l6-5v16l-6-5H1zM14.500 6q3 4 0 8M17.500 3.500q5 6.500 0 13M20.500 1.500q6 8.500 0 17" fill="none" stroke="#222" stroke-width="1.500"/></svg>
    <svg class="bat" viewBox="0 0 24 18"><rect x="1" y="2" width="19" height="14" rx="3.500" fill="none" stroke="#222" stroke-width="1.600"/><path d="M4 5h5v8H4z" fill="#222"/><path d="M22 6v6" stroke="#222" stroke-width="2.500"/></svg>
    <p class="clock">18:34<br>28-07-2024</p>
    <svg class="bell" viewBox="0 0 20 24"><path d="M10 0q7 1 7 8v6l2.500 4H.5L3 14V8q0-7 7-8z" fill="#0a3f92"/><path d="M7 20h6q-1 3-3 3t-3-3z" fill="#0a3f92"/></svg>
    <svg class="cop" viewBox="0 0 36 36"><defs><linearGradient id="ca" x2="0" y2="1"><stop offset="0" stop-color="#1a8fe6"/><stop offset=".6" stop-color="#44b678"/><stop offset="1" stop-color="#f2d01f"/></linearGradient><linearGradient id="cb" x2="0" y2="1"><stop offset="0" stop-color="#a86ff0"/><stop offset="1" stop-color="#f26a6a"/></linearGradient></defs><path d="M12 0h10q3 0 4 4l1 4h-8q-3 0-4 4l-3 12H5q-6 0-4-8L5 5q2-5 7-5z" fill="url(#ca)"/><path d="M22 11h8q6 0 5 7l-3 10q-2 5-7 5H15q3-1 4-5z" fill="url(#cb)"/><rect x="9" y="24" width="27" height="12" rx="3" fill="#ffc400"/><text x="11.500" y="34" font-size="10.500" font-weight="700" font-family="Open Sans, sans-serif" textLength="22">PRE</text></svg>
  </div>
</div>
<script src="board.js"></script>
</body>
</html>
```
FILE: styles.css
```css
* { box-sizing: border-box; }
body { margin: 0; width: 1920px; height: 1080px; overflow: hidden; background: #f0f0f0; color: #000; font: 17px/24px "Open Sans", "Noto Sans", sans-serif; letter-spacing: -.3px; display: flex; flex-direction: column; }
b, i, em, s, u { font-weight: inherit; font-style: normal; text-decoration: none; }
svg { display: block; flex: none; }
.defs { position: absolute; }

.titlebar { height: 34px; flex: none; display: flex; align-items: center; padding-left: 2px; background: linear-gradient(90deg, #eef3fb 0 40%, #edf3f8 50% 75%, #eef3fb 85%); }
.appicon { width: 24px; height: 24px; }
.caption { margin-left: 6px; font-size: 17px; letter-spacing: .1px; padding-top: 1px; }
.winbtns { margin-left: auto; display: flex; gap: 54px; padding-right: 29px; }
.winbtns svg { width: 16px; height: 16px; }
.menubar { height: 28px; flex: none; background: #fff; display: flex; align-items: center; gap: 22.600px; padding: 3px 0 0 11px; }

.toolbar { height: 54px; flex: none; display: flex; padding-left: 7px; }
.toolbar b { width: 49px; padding-top: 3px; display: flex; align-items: center; justify-content: center; }
.toolbar b svg, .vbar b svg { width: 36px; height: 36px; overflow: visible; }
.toolbar i { width: 9px; padding: 7px 0 5px 3px; }
.toolbar i::before, .optrow i::before { content: ""; display: block; width: 1px; height: 42px; background: #919191; }

.optbar { height: 52px; flex: none; background: #dcdcdc; }
.optrow { width: 1192px; height: 52px; background: #f0f0f0; display: flex; align-items: flex-start; padding: 3px 0 0 8px; }
.optrow i { width: 1px; margin-top: 2px; }
.combo { height: 33px; margin-top: 6px; background: #fdfdfd; border: 1px solid #d0d0d0; border-bottom-color: #b5b5b5; border-radius: 2px; display: flex; align-items: center; padding: 2px 7px 0 3px; }
.combo svg { width: 12px; height: 8px; margin-left: auto; }
.c1 { width: 230px; margin-right: 3px; }
.c2 { width: 220px; margin: 6px 5px 0 6px; letter-spacing: -.2px; }
.c3 { width: 182px; height: 31px; margin: 6px 8px 0 6px; border-color: #7a7a7a; padding-left: 8px; letter-spacing: -.45px; }
.c3 em { width: 9px; height: 9px; background: #c83434; border: 1px solid #000; margin: 0 8px 2px 0; }
.c4 { width: 254px; margin: 6px 5px 0 6px; letter-spacing: -.05px; }
.c5 { width: 144px; margin-left: 6px; }
.autow { width: 46px; height: 46px; padding: 4px; margin-right: 5px; }
.autow svg, .pair { width: 36px; height: 36px; }
.pair { margin: 5px 10px 0 0; }
.on { background: #b2d5f3; border: 1px solid #0078d7; }

.work { height: 757px; flex: none; display: flex; border-top: 1px solid #a0a0a0; border-bottom: 1px solid #a0a0a0; }
.vbar { width: 53px; height: 755px; padding: 7px 0 0 3px; display: flex; flex-direction: column; }
.vbar.left { border-right: 1px solid #8e8e8e; }
.vbar.right { padding-left: 4px; width: 53px; }
.vbar b { width: 46px; height: 46px; margin-bottom: 3px; flex: none; display: flex; align-items: center; justify-content: center; position: relative; }
.vbar i { height: 9px; flex: none; padding: 2px 2px 0; }
.vbar i::before { content: ""; display: block; height: 1px; background: #919191; }
.sub::after { content: ""; position: absolute; right: 0; bottom: 0; border: solid transparent; border-width: 0 0 10px 10px; border-bottom-color: #000; }
.ic { font-family: "DejaVu Sans", sans-serif; font-weight: 700; fill: #545454; letter-spacing: 0; }
.lt { font-family: "Noto Sans", sans-serif; font-weight: 600; }
.it { font-style: italic; }
.board { background: #001023; }
.st { font-family: "Inter", sans-serif; letter-spacing: 0; }
.mono { font-family: "DejaVu Sans Mono", monospace; }

.panel { width: 276px; border-left: 6px solid #dcdcdc; background: #f0f0f0; }
.panel h2 { margin: 0; height: 31px; padding: 0 0 0 5px; font-size: 17px; font-weight: 400; line-height: 30px; background: #bababa; }
.tabs { display: flex; align-items: flex-end; height: 37px; padding-left: 1px; }
.tabs span { height: 30px; width: 70px; padding: 3px 0 0 5px; border: 1px solid #e3e3e3; border-width: 1px 1px 0 0; background: #f3f3f3; letter-spacing: -.1px; }
.tabs span:last-child { padding-left: 7px; }
.tabs .cur { height: 32px; width: 74px; padding-left: 6px; background: #fafafa; }
.page { height: 355px; margin: 0 2px 0 1px; background: #f9f9f9; border: 1px solid #e3e3e3; border-left: 0; padding: 1px 0 0 3px; }
.list { display: flex; height: 319px; }
.list ul { width: 236px; height: 319px; margin: 0; padding: 0; list-style: none; overflow: hidden; background: #f0f0f0; }
.list li { height: 24px; display: flex; align-items: center; padding-left: 16px; font-size: 15.500px; letter-spacing: -.35px; }
.list li.sel { background: #e1e1e1; padding-left: 5px; }
.list li.sel::before { content: ""; border: solid transparent; border-width: 4.500px 0 4.500px 5px; border-left-color: #3a3aff; margin-right: 6px; }
.list s { width: 13px; height: 13px; margin-right: 6px; flex: none; }
.list .chk { background-image: conic-gradient(transparent 25%, #ffffff1c 0 50%, transparent 0 75%, #ffffff1c 0); background-size: 8px 8px; }
.list li svg { width: 16px; height: 16px; margin-right: 5px; }
.scroll { flex: 1; margin-left: 1px; background: #f0f0f0; padding: 25px 0 0 7px; }
.scroll div { width: 11px; height: 118px; background: #858585; }
.ldo { margin: 4px 6px 0 5px; height: 27px; padding-bottom: 4px; background: #fff; display: flex; align-items: center; padding-left: 9px; font-size: 15.500px; }
.ldo svg { width: 6px; height: 11px; margin-right: 5px; }
.panel label { display: block; height: 36px; padding: 11px 0 0 7px; font-size: 15.500px; letter-spacing: -.35px; }
.panel label.l2 { height: 28px; padding-top: 3px; letter-spacing: -.3px; }
.cp { margin: 0 7px; padding-top: 0; }
.strip { height: 6px; background: #dcdcdc; margin-top: 6px; }
.filter { display: grid; grid-template-columns: 126.500px 1fr; grid-auto-rows: 25px; padding: 5px 0 0 5px; font-size: 15.500px; letter-spacing: -.4px; }
.filter span { display: flex; align-items: center; white-space: nowrap; padding-top: 1px; }
.filter span::before { content: ""; width: 20px; height: 20px; margin: -2px 4px 0 0; border: 1px solid #616161; border-radius: 3.500px; background: #f4f4f4; flex: none; }
.filter .ck::before { border: 0; background: #005fb8 url("data:image/svg+xml,%3Csvg xmlns='http://www.w3.org/2000/svg' viewBox='0 0 20 20'%3E%3Cpath d='M5 10l3.500 3.500L15 7' fill='none' stroke='white' stroke-width='1.100'/%3E%3C/svg%3E"); }

.msg { height: 50px; flex: none; display: flex; padding-left: 17px; line-height: 25px; padding-top: 1px; white-space: nowrap; overflow: hidden; border-bottom: 1px solid #d5d5d5; }
.msg div:nth-child(1) { flex: 0 0 149px; letter-spacing: .1px; }
.msg div:nth-child(2) { flex: 0 0 133px; letter-spacing: -.1px; }
.msg div:nth-child(3) { flex: 0 0 134px; }
.msg div:nth-child(4) { flex: 0 0 115px; letter-spacing: -.1px; }
.msg div:nth-child(5) { flex: 0 0 755px; letter-spacing: .11px; }
.msg div:nth-child(6) { letter-spacing: .06px; }
.status { height: 33px; flex: none; display: flex; line-height: 34px; padding-top: 2px; letter-spacing: -.27px; }
.status span { border-right: 1px solid #d5d5d5; padding-left: 4px; height: 30px; white-space: nowrap; }
.status span:nth-child(1) { width: 297px; }
.status span:nth-child(2) { width: 117px; }
.status span:nth-child(3) { width: 251px; letter-spacing: .3px; }
.status span:nth-child(4) { width: 397px; }
.status span:nth-child(5) { width: 288px; }
.status span:nth-child(6) { width: 91px; }
.status span:nth-child(7) { width: 255px; letter-spacing: -.05px; }
.status span:nth-child(8) { border: 0; }

.taskbar { height: 72px; flex: none; border-top: 2px solid #aeb4be; display: flex; align-items: center; background: linear-gradient(90deg, #e0edf8 0, #e0edf9 18%, #d3e1f8 30%, #d6def5 45%, #d5def8 58%, #d8daee 65%, #dcebf8 76%, #e4edf5 100%); }
.taskbar p { margin: 0; padding-bottom: 2px; }
.weather { width: 472px; display: flex; align-items: center; padding-left: 28px; gap: 11px; color: #1c1c1c; font-size: 16.500px; }
.weather svg { width: 37px; height: 35px; }
.weather span { color: #5a5e66; letter-spacing: .2px; }
.start { width: 35px; height: 35px; }
.search { width: 327px; height: 46px; margin-left: 21px; border-radius: 23px; background: #f3f6fd; border: 1px solid #c3cbe0; border-bottom: 2px solid #b3bbcd; display: flex; align-items: center; padding-left: 15px; font-size: 19px; color: #5c5c5c; }
.search span { padding-bottom: 2px; letter-spacing: .1px; }
.mag { width: 24px; height: 24px; margin-right: 15px; }
.kebab { width: 72px; height: 34px; margin: 0 4px 0 auto; }
.apps { display: flex; margin-left: 4px; }
.apps div { width: 66.200px; height: 58px; position: relative; display: flex; align-items: center; justify-content: center; }
.apps svg { width: 36px; height: 36px; }
.apps .run::after { content: ""; position: absolute; left: 29px; bottom: -1px; width: 9px; height: 5px; border-radius: 3px; background: #7d828c; }
.apps .act { width: 56px; margin-left: 5px; background: #eaf0fb; border: 1px solid #cfd6ea; border-radius: 6px; }
.apps .act::after { content: ""; position: absolute; left: 15px; bottom: 0; width: 24px; height: 5px; border-radius: 3px; background: #0f78d4; }
.apps u { position: absolute; left: 33px; top: 2px; width: 27px; height: 25px; border-radius: 13px; background: #0f78d4; color: #fff; font-size: 15px; text-align: center; }
.tray { flex: 1; display: flex; align-items: center; color: #1c1c1c; font-size: 17px; }
.up { width: 16px; height: 10px; margin-left: 40px; }
.od { width: 26px; height: 22px; margin: 0 24px 0 26px; }
.lang { width: 40px; text-align: center; }
.wifi { width: 24px; height: 20px; margin-left: 25px; }
.vol { width: 25px; height: 20px; margin-left: 12px; }
.bat { width: 24px; height: 18px; margin-left: 11px; }
.clock { width: 118px; text-align: right; letter-spacing: .55px; }
.bell { width: 20px; height: 24px; margin-left: 13px; }
.cop { width: 36px; height: 36px; margin-left: 26px; }
```
FILE: board.js
```js
const NS = "http://www.w3.org/2000/svg";
function add(parent, name, attrs, text) {
  const el = document.createElementNS(NS, name);
  for (const k in attrs) el.setAttribute(k, attrs[k]);
  if (text) el.textContent = text;
  document.getElementById(parent).appendChild(el);
}

// Grid: one dot per cell, stronger marks on every tenth row and column.
const step = 18.12, x0 = 116, y0 = 289;
let fine = "", tick = "", major = "";
for (let i = -3; i < 82; i++) {
  const x = Math.round(x0 + i * step);
  for (let j = -6; j < 36; j++) {
    const y = Math.round(y0 + j * step);
    const mx = i % 10 === 0, my = j % 10 === 0;
    if (mx && my) major += `M${x - 1} ${y - 1}h3v3h-3z`;
    else if (mx) tick += `M${x - 1} ${y}h3v1h-3z`;
    else if (my) tick += `M${x} ${y - 1}h1v3h-1z`;
    else fine += `M${x} ${y}h1v1h-1z`;
  }
}
add("grid", "path", { d: fine, fill: "#535c66" });
add("grid", "path", { d: tick, fill: "#69717a" });
add("grid", "path", { d: major, fill: "#848484" });

// Header pins, 1-15 down the left side and 30-16 down the right.
const netted = [8, 9, 29, 27, 21, 20];
for (let side = 0; side < 2; side++) {
  for (let i = 0; i < 15; i++) {
    const cx = side ? 683 : 466, cy = 285 + i * 36.2;
    const n = side ? 30 - i : i + 1;
    if (n === 1) {
      add("pins", "rect", { x: 451.5, y: 270.5, width: 29, height: 29, rx: 2, fill: "none", stroke: "#e3b72e" });
      add("pins", "rect", { x: 454, y: 273, width: 23, height: 23, fill: "#e3b72e" });
      add("pins", "circle", { cx, cy, r: 7.5, fill: "#001023" });
    } else {
      add("pins", "circle", { cx, cy, r: 13.5, fill: "none", stroke: "#e3b72e" });
      add("pins", "circle", { cx, cy, r: 9, fill: "#001023", stroke: "#e3b72e", "stroke-width": 4 });
    }
    add("pins", "text", { x: cx, y: cy - 2, "font-size": 10, "text-anchor": "middle", fill: "#d8d8d0", class: "st" }, String(n));
    add("pins", "path", { d: `M${cx - 9} ${Math.round(cy) + 1.5}h18`, stroke: "#a9a9a0", "stroke-width": netted.includes(n) ? 2 : 1, "stroke-dasharray": "3 1 1 1", opacity: .7 });
  }
}

// Display connector: thirty pads at 10 px pitch.
for (let i = 0; i < 30; i++) {
  const x = Math.round(946 + i * 10);
  const wide = i >= 14;
  add("oledpads", "rect", { x: x - 3.5, y: 291.5, width: wide ? 10 : 11, height: 33.5, rx: 1, fill: "none", stroke: "#c83434" });
  add("oledpads", "rect", { x: x - (wide ? 2 : 0), y: 294, width: wide ? 7 : 5.5, height: 29, fill: "#c83434" });
}

// Sensor package: six pads on each of the four sides.
for (let i = 0; i < 6; i++) {
  const x = 1126 + i * 5.5, y = 479.5 + i * 5.5;
  for (const py of [467, 510]) {
    add("pirpads", "rect", { x: x - 3.5, y: py - 1.5, width: 7, height: 12, rx: 2, fill: "none", stroke: "#c83434", "stroke-width": .7 });
    add("pirpads", "rect", { x: x - 1.5, y: py, width: 3, height: 9, fill: "#c83434" });
  }
  for (const px of [1113, 1157]) {
    add("pirpads", "rect", { x: px - 1.5, y: y - 3.5, width: 13, height: 7, rx: 2, fill: "none", stroke: "#c83434", "stroke-width": .7 });
    add("pirpads", "rect", { x: px, y: y - 1.5, width: 10, height: 3, fill: "#c83434" });
  }
}
```
